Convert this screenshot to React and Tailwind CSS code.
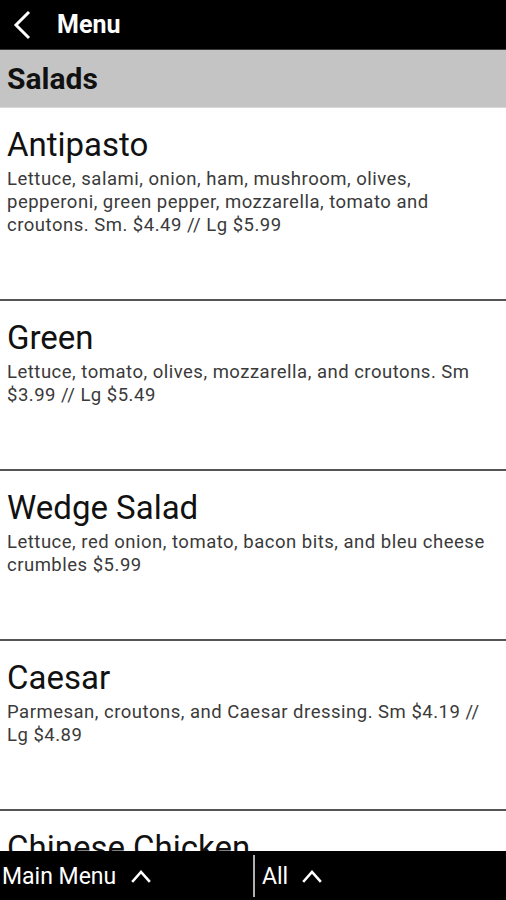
import React from 'react';

const items = [
    {
        name: 'Antipasto',
        desc: 'Lettuce, salami, onion, ham, mushroom, olives, pepperoni, green pepper, mozzarella, tomato and croutons. Sm. $4.49 // Lg $5.99',
    },
    {
        name: 'Green',
        desc: 'Lettuce, tomato, olives, mozzarella, and croutons. Sm $3.99 // Lg $5.49',
    },
    {
        name: 'Wedge Salad',
        desc: 'Lettuce, red onion, tomato, bacon bits, and bleu cheese crumbles $5.99',
    },
    {
        name: 'Caesar',
        desc: 'Parmesan, croutons, and Caesar dressing. Sm $4.19 // Lg $4.89',
    },
    {
        name: 'Chinese Chicken',
        desc: 'Lettuce, chicken, crispy noodles, almonds and oriental dressing. $6.49',
    },
];

function ChevronUp() {
    return (
        <svg width="20" height="14" viewBox="0 0 20 14" fill="none">
            <path d="M2 12 L10 3 L18 12" stroke="white" strokeWidth="2.6" strokeLinecap="square" />
        </svg>
    );
}

function MenuItem({ name, desc }) {
    return (
        <div className="border-b-2 border-[#555555] pl-[7px] pr-[7px] pt-[18px] pb-[62px]">
            <div className="text-[33px] leading-[38px] text-[#111111]">{name}</div>
            <p className="mt-[4px] text-[18.5px] leading-[23px] tracking-[0.5px] text-[#3a3a3a]">{desc}</p>
        </div>
    );
}

export default function App() {
    return (
        <div className="h-[900px] w-[506px] flex flex-col bg-white overflow-hidden font-['Roboto',sans-serif]">
            <header className="h-[50px] shrink-0 bg-black flex items-center border-b border-[#3a3a3a]">
                <svg className="ml-[12px]" width="20" height="30" viewBox="0 0 20 30" fill="none">
                    <path d="M17 2 L4 15 L17 28" stroke="white" strokeWidth="3" />
                </svg>
                <span className="ml-[25px] text-[25px] font-bold text-white">Menu</span>
            </header>
            <div className="h-[58px] shrink-0 bg-[#c4c4c4] flex items-center pl-[7px] border-b border-[#d8d8d8]">
                <span className="text-[30px] font-bold text-[#111111]">Salads</span>
            </div>
            <main className="flex-1 overflow-hidden">
                {items.map((it) => (
                    <MenuItem key={it.name} {...it} />
                ))}
            </main>
            <footer className="h-[49px] shrink-0 bg-black flex items-center text-white text-[23px]">
                <div className="w-[253px] flex items-center pl-[2px] pt-[3px]">
                    <span>Main Menu</span>
                    <span className="ml-[15px] mb-[3px]">
                        <ChevronUp />
                    </span>
                </div>
                <div className="w-[2px] h-[42px] bg-[#b0b0b0]" />
                <div className="flex items-center pl-[7px] pt-[3px]">
                    <span>All</span>
                    <span className="ml-[14px] mb-[3px]">
                        <ChevronUp />
                    </span>
                </div>
            </footer>
        </div>
    );
}
